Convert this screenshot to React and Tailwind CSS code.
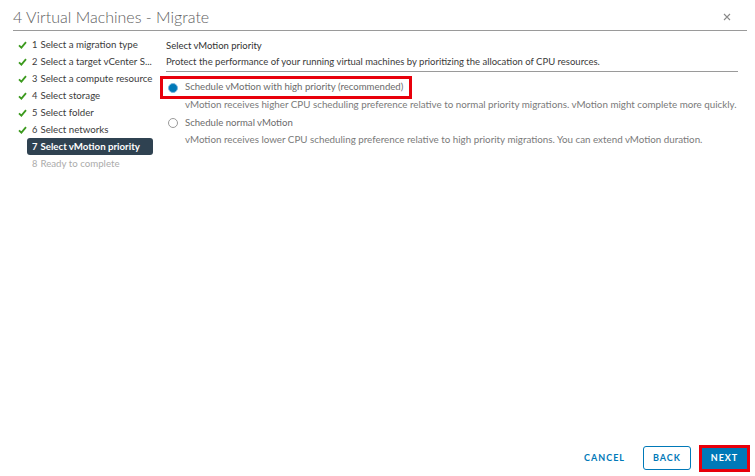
import React from "react";

const steps = [
  { n: 1, label: "Select a migration type", done: true },
  { n: 2, label: "Select a target vCenter S...", done: true },
  { n: 3, label: "Select a compute resource", done: true },
  { n: 4, label: "Select storage", done: true },
  { n: 5, label: "Select folder", done: true },
  { n: 6, label: "Select networks", done: true },
  { n: 7, label: "Select vMotion priority", active: true },
  { n: 8, label: "Ready to complete", disabled: true },
];

function Check() {
  return (
    <svg width="9" height="8" viewBox="0 0 9 8">
      <path d="M1 4.3 L3.4 6.6 L8 1.2" fill="none" stroke="#3c9a1e" strokeWidth="1.8" />
    </svg>
  );
}

function Radio({ checked }) {
  if (checked) {
    return (
      <span className="w-[10px] h-[10px] rounded-full border border-[#7fb6dc] bg-[#0079b8] shrink-0" />
    );
  }
  return <span className="w-[10px] h-[10px] rounded-full border border-[#9a9a9a] bg-white shrink-0" />;
}

export default function App() {
  return (
    <div className="w-[755px] h-[476px] bg-white flex flex-col text-[#565656]" style={{ fontFamily: "Lato, 'Open Sans', sans-serif" }}>
      <div className="ml-[13px] mr-[8px] h-[31px] border-b border-[#9a9a9a] flex items-center justify-between">
        <h1 className="text-[16px] leading-none text-[#606060] font-light pt-[3px]">4 Virtual Machines - Migrate</h1>
        <svg width="8" height="8" viewBox="0 0 8 8" className="mr-[16px] mt-[3px]">
          <path d="M1 1 L7 7 M7 1 L1 7" stroke="#8a8a8a" strokeWidth="1.1" />
        </svg>
      </div>

      <div className="flex flex-1">
        <div className="w-[166px] pl-[18px] pt-[5px] shrink-0">
          {steps.map((s) => (
            <div key={s.n} className="flex items-center h-[17px]">
              <span className="w-[9px] flex items-center">{s.done && <Check />}</span>
              <span
                className={
                  "w-[126px] h-[17px] flex items-center pl-[5px] text-[9.7px] whitespace-nowrap rounded-[3px] " +
                  (s.active ? "bg-[#2f4251] text-white font-bold" : s.disabled ? "text-[#ababab]" : "text-[#3b3b3b]")
                }
              >
                <span className="text-[9.3px] mr-[3px]">{s.n}</span>
                {s.label}
              </span>
            </div>
          ))}
        </div>

        <div className="flex-1 pt-[8px] mr-[17px] text-[9.5px]">
          <div className="h-[14px] leading-[14px] text-[#313131]">Select vMotion priority</div>
          <div className="h-[14px] leading-[14px] mt-[2px] text-[#3a3a3a] whitespace-nowrap">
            Protect the performance of your running virtual machines by prioritizing the allocation of CPU resources.
          </div>
          <div className="mt-[2px] border-b border-[#9a9a9a]" />

          <div className="flex">
            <div className="mt-[4px] -ml-[6px] h-[23px] border-[3px] border-[#e8000b] flex items-center pl-[5px] pr-[6px] gap-[7px]">
              <Radio checked />
              <span className="text-[#6b6b6b] text-[9.6px] whitespace-nowrap">Schedule vMotion with high priority (recommended)</span>
            </div>
          </div>
          <div className="pl-[19px] h-[11px] leading-[11px] text-[9.8px] text-[#7a7a7a] whitespace-nowrap">
            vMotion receives higher CPU scheduling preference relative to normal priority migrations. vMotion might complete more quickly.
          </div>

          <div className="mt-[2px] -ml-[6px] h-[22px] border-[3px] border-transparent flex items-center pl-[5px] gap-[7px]">
            <Radio />
            <span className="text-[#6b6b6b] text-[9.6px]">Schedule normal vMotion</span>
          </div>
          <div className="pl-[19px] h-[11px] leading-[11px] text-[9.8px] text-[#7a7a7a] whitespace-nowrap">
            vMotion receives lower CPU scheduling preference relative to high priority migrations. You can extend vMotion duration.
          </div>
        </div>
      </div>

      <div className="h-[36px] flex items-center justify-end pr-[5px]">
        <button className="text-[9px] font-bold tracking-[1px] text-[#0079b8] mr-[18px]">CANCEL</button>
        <button className="w-[48px] h-[24px] border border-[#0079b8] rounded-[3px] text-[9px] font-bold tracking-[1px] text-[#0079b8] mr-[8px]">
          BACK
        </button>
        <div className="border-[3px] border-[#e8000b]">
          <button className="w-[45px] h-[21px] bg-[#0079b8] text-white text-[9px] font-bold tracking-[1px] block">
            NEXT
          </button>
        </div>
      </div>
    </div>
  );
}
